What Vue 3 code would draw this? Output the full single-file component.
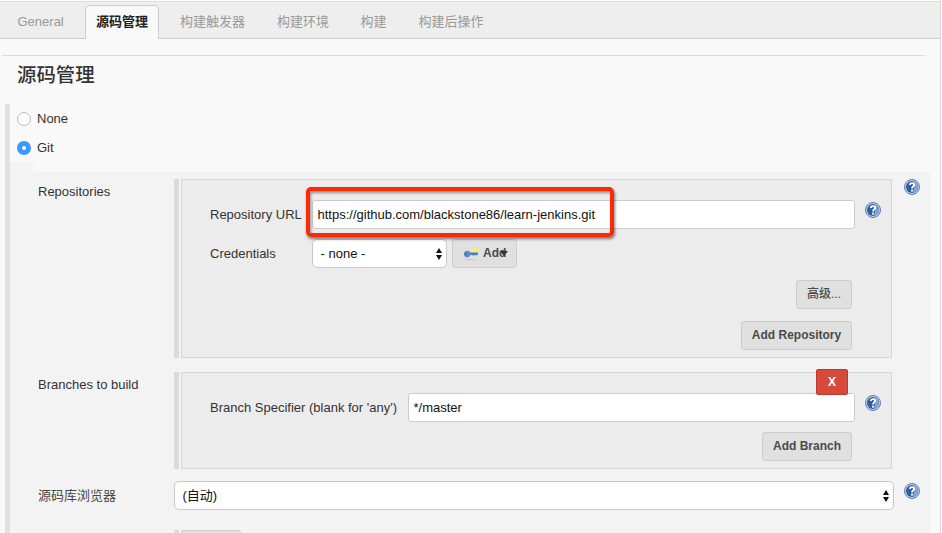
<script setup>
import { h } from 'vue'

const tabs = [
  { label: 'General', cls: 't-general' },
  { label: '源码管理', cls: 'active' },
  { label: '构建触发器', cls: 't-trigger' },
  { label: '构建环境', cls: 't-env' },
  { label: '构建', cls: 't-build' },
  { label: '构建后操作', cls: 't-post' },
]

const HelpIcon = () =>
  h('svg', { width: 16, height: 16, viewBox: '0 0 16 16' }, [
    h('circle', { cx: 8, cy: 8, r: 7.5, fill: '#c0d0e6', stroke: '#5a7eb2', 'stroke-width': 1 }),
    h('circle', { cx: 8, cy: 8, r: 6, fill: '#2f5d9f' }),
    h('path', { d: 'M9 2.1A6 6 0 0 1 9 13.9L10 8z', fill: '#7fa3d3' }),
    h('path', {
      d: 'M5.9 6C5.9 3.4 10.1 3.5 10.1 5.9C10.1 7.4 8 7.6 8 9.6',
      fill: 'none',
      stroke: '#fff',
      'stroke-width': 1.8,
    }),
    h('circle', { cx: 8, cy: 11.7, r: 1.1, fill: '#fff' }),
  ])

const Arrows = () =>
  h('svg', { width: 6, height: 12, viewBox: '0 0 6 12' }, [
    h('path', { d: 'M3 0L6 5H0zM3 12L0 7H6z', fill: '#111' }),
  ])
</script>

<template>
  <div class="page">
    <nav class="tabs">
      <div v-for="t in tabs" :key="t.label" class="tab" :class="t.cls">{{ t.label }}</div>
    </nav>
    <div class="rule"></div>
    <h1>源码管理</h1>
    <section class="scm">
      <div class="choices">
        <label class="choice"><i class="radio"></i>None</label>
        <label class="choice"><i class="radio on"></i>Git</label>
      </div>
      <div class="notch"></div>
      <div class="body">
        <div class="row repos">
          <div class="name n-repos"><span>Repositories</span></div>
          <div class="bar"></div>
          <div class="box">
            <div class="line">
              <span class="lab l-url">Repository URL</span>
              <div class="field url"><span>https://github.com/blackstone86/learn-jenkins.git</span>
                <div class="highlight"></div>
              </div>
              <HelpIcon class="help inner" />
            </div>
            <div class="line second">
              <span class="lab l-cred">Credentials</span>
              <div class="select cred"><span>- none -</span><Arrows /></div>
              <div class="btn add">
                <svg class="key" width="16" height="14" viewBox="0 0 16 14">
                  <ellipse cx="7" cy="12.6" rx="5.5" ry="0.9" fill="#cdcdcd" />
                  <circle cx="11.8" cy="3" r="2.5" fill="#f7ee62" />
                  <path d="M4 3.8C6 3.8 6.8 4.8 7.5 5.4H15V8H13.5V8.6H12V8H11V8.8H9.5V8H7.5C6.8 9.2 6 10.4 4 10.4C2 10.4 0.8 9 0.8 7.1C0.8 5.2 2 3.8 4 3.8Z" fill="#5b8cc9" />
                  <path d="M7.5 6.7H14.5" stroke="#3f6fae" />
                  <circle cx="3" cy="7" r="0.9" fill="#3a659f" />
                </svg>
                <span>Add</span>
                <svg class="caret" width="8" height="6" viewBox="0 0 8 6"><path d="M0 1H8L4 6z" fill="#333" /></svg>
              </div>
            </div>
            <div class="btn adv">高级...</div>
            <div class="btn addrepo"><span>Add Repository</span></div>
          </div>
          <HelpIcon class="help outer" />
        </div>
        <div class="row branches">
          <div class="name n-branches"><span>Branches to build</span></div>
          <div class="bar"></div>
          <div class="box">
            <div class="line">
              <span class="lab l-branch">Branch Specifier (blank for 'any')</span>
              <div class="field branch"><span>*/master</span></div>
              <HelpIcon class="help inner" />
            </div>
            <div class="btn addbranch"><span>Add Branch</span></div>
            <div class="delete">X</div>
          </div>
        </div>
        <div class="row browser">
          <div class="name cjk">源码库浏览器</div>
          <div class="select auto"><span>(自动)</span><Arrows /></div>
          <HelpIcon class="help last" />
        </div>
        <div class="row tail">
          <div class="bar"></div>
          <div class="btn stub"></div>
        </div>
      </div>
    </section>
  </div>
</template>

<style>
body {
  background: #fff;
  overflow: hidden;
}
</style>

<style scoped>
* {
  box-sizing: border-box;
}
.page {
  width: 941px;
  height: 533px;
  overflow: hidden;
  display: flex;
  flex-direction: column;
  background: #f9f9f9;
  border-top: 1px solid #fafdf4;
  border-right: 1px solid #d6d6d6;
  font: 13px/16px "Liberation Sans", "Noto Sans CJK SC", sans-serif;
  color: #333;
}
.tabs {
  height: 38px;
  flex: none;
  display: flex;
  align-items: flex-end;
  background: #eee;
  border-top: 1px solid #dbe3d0;
  border-bottom: 1px solid #ccc;
  color: #999;
}
.tab {
  height: 33px;
  line-height: 33px;
  padding-left: 17.5px;
  white-space: nowrap;
}
.t-general {
  width: 85px;
}
.active {
  width: 74px;
  height: 34px;
  margin-bottom: -1px;
  padding-left: 10px;
  line-height: 31px;
  background: #f9f9f9;
  border: 1px solid #ccc;
  border-bottom: 0;
  border-radius: 5px 5px 0 0;
  color: #222;
  font-weight: bold;
}
.t-trigger {
  width: 100px;
  padding-left: 21px;
}
.t-env {
  width: 84px;
  padding-left: 18px;
}
.t-build {
  width: 58px;
}
.t-post {
  width: 100px;
}
.rule {
  height: 1px;
  flex: none;
  margin: 16px 15px 0 2px;
  background: #ddd;
}
h1 {
  margin: 5px 0 15px 17px;
  height: 28px;
  flex: none;
  font-size: 19.4px;
  line-height: 28px;
  font-weight: 500;
}
.scm {
  height: 429px;
  flex: none;
  margin-left: 5px;
  border-left: 5px solid #e0e0e0;
}
.choices {
  height: 58px;
  padding-left: 7px;
  display: flex;
  flex-direction: column;
}
.choice {
  height: 29px;
  display: flex;
  align-items: center;
  gap: 6px;
}
.radio {
  width: 14px;
  height: 14px;
  border: 1px solid #bbb;
  border-radius: 50%;
  background: #fff;
}
.radio.on {
  border: 5px solid #3b99fc;
}
.notch {
  width: 23px;
  height: 10px;
  background: #f3f3f3;
}
.body {
  width: 920px;
  height: 361px;
  padding-top: 7px;
  background: #f3f3f3;
}
.row {
  display: flex;
  align-items: flex-start;
}
.name {
  width: 164px;
  flex: none;
  padding: 5px 0 0 28px;
}
.bar {
  width: 5px;
  flex: none;
  align-self: stretch;
  margin-right: 2px;
  background: #dadada;
}
.box {
  position: relative;
  width: 711px;
  padding: 20px 0 0 28px;
  border: 1px solid #d6d6d6;
  background: #ececec;
  display: flex;
  flex-direction: column;
}
.repos .box {
  height: 179px;
}
.branches {
  margin-top: 14px;
}
.branches .box {
  height: 97px;
}
.line {
  display: flex;
  align-items: center;
  height: 29px;
}
.second {
  margin-top: 10px;
}
.l-url,
.l-cred {
  width: 102px;
}
.l-branch {
  width: 198px;
}
.lab,
.name {
  white-space: nowrap;
}
.field {
  position: relative;
  height: 29px;
  padding-left: 4.5px;
  line-height: 27px;
  background: #fff;
  border: 1px solid #ccc;
  border-radius: 3px;
  color: #111;
  white-space: nowrap;
}
.url {
  width: 543px;
}
.branch {
  width: 447px;
}
.highlight {
  position: absolute;
  left: -7px;
  top: -14px;
  width: 308px;
  height: 50px;
  border: 4px solid #fb2a06;
  border-radius: 5px;
  box-shadow: 1px 2px 3px rgba(0, 0, 0, 0.5), inset 1px 2px 3px rgba(0, 0, 0, 0.4);
}
.help {
  flex: none;
}
.inner {
  margin: -9px 0 0 10px;
}
.outer {
  margin-left: 12px;
}
.select {
  height: 29px;
  display: flex;
  align-items: center;
  justify-content: space-between;
  padding: 0 4px 0 7.5px;
  border: 1px solid #c8c8c8;
  border-radius: 5px;
  background: #fff;
  color: #111;
}
.cred {
  width: 135px;
}
.btn {
  height: 29px;
  flex: none;
  display: flex;
  align-items: center;
  justify-content: center;
  align-self: flex-end;
  margin-right: 39px;
  padding-bottom: 2px;
  background: #e0e0e0;
  border: 1px solid #ccc;
  border-radius: 3px;
  color: #4a4a4a;
  font-weight: bold;
  font-size: 12px;
  white-space: nowrap;
}
.add {
  width: 65px;
  margin: 0 0 0 5px;
  justify-content: flex-start;
  padding-left: 10px;
}
.key {
  margin: 2px 4px 0 0;
}
.caret {
  margin: 1px 0 0 -6px;
}
.adv {
  width: 56px;
  margin-top: 12px;
  font-weight: 500;
}
.addrepo {
  width: 111px;
  margin-top: 12px;
}
.addbranch {
  width: 90px;
  margin-top: 10px;
}
.delete {
  position: absolute;
  right: 43px;
  top: -4px;
  width: 32px;
  height: 26px;
  border: 1px solid #c0392b;
  border-radius: 2px;
  background: #d54a3b;
  color: #fff;
  font-weight: bold;
  font-size: 12px;
  line-height: 24px;
  text-align: center;
}
.browser {
  margin-top: 12px;
}
.cjk {
  padding-top: 7px;
  color: #484848;
}
.auto {
  width: 720px;
}
.last {
  margin: 2px 0 0 10px;
}
.tail {
  margin-top: 20px;
  padding-left: 164px;
}
.stub {
  width: 60px;
  margin: 0;
}
</style>
